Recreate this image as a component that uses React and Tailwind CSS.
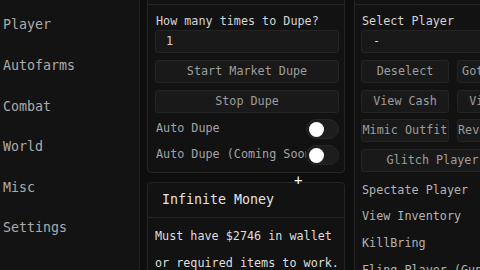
import React from "react";

const menu = ["Player", "Autofarms", "Combat", "World", "Misc", "Settings"];

function Toggle() {
  return (
    <div className="w-[33px] h-[20px] shrink-0 rounded-full bg-[#1d1d1d] border border-[#262626] flex items-center pl-[2px]">
      <div className="w-[15px] h-[15px] rounded-full bg-white" />
    </div>
  );
}

function Button({ label, className = "" }) {
  return (
    <div
      className={`h-[23px] shrink-0 bg-[#191919] border border-[#242424] rounded-[3px] overflow-hidden text-center leading-[21px] whitespace-nowrap text-[#9d9d9d] ${className}`}
    >
      {label}
    </div>
  );
}

function App() {
  return (
    <div className="relative w-[480px] h-[270px] overflow-hidden flex bg-[#0e0e0e] font-['DejaVu_Sans_Mono',monospace] text-[11.75px]">
      {/* sidebar */}
      <div className="w-[140px] h-full shrink-0 bg-[#131313] border-r border-[#222222] pt-[5px] pl-[3px]">
        {menu.map((item) => (
          <div
            key={item}
            className="h-[40.6px] flex items-center text-[13.3px] text-[#ababab]"
          >
            {item}
          </div>
        ))}
      </div>

      <div className="flex gap-[9px] pl-[7px]">
        {/* left column */}
        <div className="w-[198px] shrink-0 flex flex-col gap-[9px] mt-[-30px]">
          <div className="rounded-[4px] border border-[#252525] bg-[#121212]">
            <div className="h-[34px] border-b border-[#252525]" />
            <div className="pt-[8px] pb-[4px] pl-[7px] pr-[5px]">
              <div className="h-[16px] leading-[16px] pl-[1px] text-[#d4d4d4]">
                How many times to Dupe?
              </div>
              <div className="mt-[1px] h-[23px] bg-[#181818] border border-[#242424] rounded-[3px] flex items-center pl-[10px] text-[#cfcfcf]">
                1
              </div>
              <Button label="Start Market Dupe" className="mt-[7px] w-full" />
              <Button label="Stop Dupe" className="mt-[7px] w-full" />
              <div className="mt-[3px] h-[26px] flex items-center">
                <span className="flex-1 pl-[1px] text-[#a3a3a3]">Auto Dupe</span>
                <Toggle />
              </div>
              <div className="h-[26px] flex items-center">
                <span className="flex-1 min-w-0 overflow-hidden whitespace-nowrap pl-[1px] text-[#a3a3a3]">
                  Auto Dupe (Coming Soon)
                </span>
                <Toggle />
              </div>
            </div>
          </div>

          <div className="rounded-[4px] border border-[#252525] bg-[#121212]">
            <div className="h-[35px] border-b border-[#252525] flex items-center pl-[14px] text-[13.3px] text-[#e2e2e2]">
              Infinite Money
            </div>
            <div className="pt-[4.5px] pl-[7px] leading-[27px] text-[#dedede] whitespace-nowrap">
              <div>Must have $2746 in wallet</div>
              <div>or required items to work.</div>
            </div>
          </div>
        </div>

        {/* right column */}
        <div className="w-[198px] shrink-0 flex flex-col mt-[-30px]">
          <div className="rounded-[4px] border border-[#252525] bg-[#121212]">
            <div className="h-[34px] border-b border-[#252525]" />
            <div className="pt-[8px] pl-[6px] pr-[6px] pb-[4px]">
              <div className="h-[16px] leading-[16px] pl-[1px] text-[#d4d4d4]">
                Select Player
              </div>
              <div className="mt-[1px] h-[23px] bg-[#181818] border border-[#242424] rounded-[3px] flex items-center pl-[11px] text-[#cfcfcf]">
                -
              </div>
              <div className="mt-[7px] flex gap-[8px]">
                <Button label="Deselect" className="w-[88px]" />
                <Button label="Goto Player" className="w-[88px]" />
              </div>
              <div className="mt-[7px] flex gap-[8px]">
                <Button label="View Cash" className="w-[88px]" />
                <Button label="View Bank" className="w-[88px]" />
              </div>
              <div className="mt-[6px] flex gap-[8px]">
                <Button label="Mimic Outfit" className="w-[88px]" />
                <Button label="Reveal Location" className="w-[88px]" />
              </div>
              <Button label="Glitch Player" className="mt-[7px] w-[143px]" />
              <div className="mt-[5px] pl-[1px] text-[#b3b3b3] whitespace-nowrap">
                <div className="h-[26.7px] flex items-center">Spectate Player</div>
                <div className="h-[26.7px] flex items-center">View Inventory</div>
                <div className="h-[26.7px] flex items-center">KillBring</div>
                <div className="h-[26.7px] flex items-center">Fling Player (Gun)</div>
              </div>
            </div>
          </div>
        </div>
      </div>

      {/* mouse cursor */}
      <div className="absolute left-[294px] top-[173px] text-[14px] leading-[14px] text-white">
        +
      </div>
    </div>
  );
}

export default App;
